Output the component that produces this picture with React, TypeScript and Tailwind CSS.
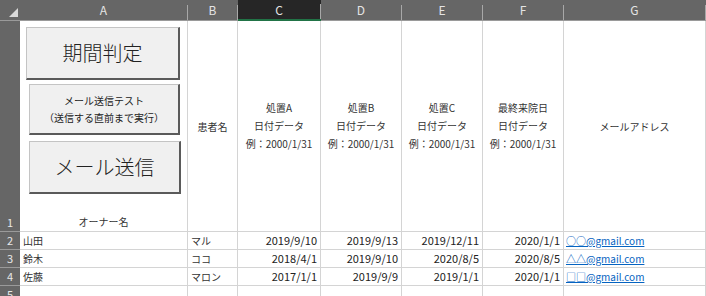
// Excel sheet mock: 患者の処置日付 + メール送信ボタン
import clsx from "clsx";

const FONT = "font-['Noto_Sans_CJK_JP','Noto_Sans',sans-serif]";

/* ---------- data ---------- */
const cols = ["A", "B", "C", "D", "E", "F", "G"];

const rows = [
  { owner: "山田", pet: "マル", a: "2019/9/10", b: "2019/9/13", c: "2019/12/11", last: "2020/1/1", mail: "○○@gmail.com" },
  { owner: "鈴木", pet: "ココ", a: "2018/4/1", b: "2019/9/10", c: "2020/8/5", last: "2020/8/5", mail: "△△@gmail.com" },
  { owner: "佐藤", pet: "マロン", a: "2017/1/1", b: "2019/9/9", c: "2019/1/1", last: "2020/1/1", mail: "□□@gmail.com" },
];

const dateHeads = ["処置A", "処置B", "処置C", "最終来院日"];

/* ---------- small parts ---------- */
function ColHead({ label, active }: { label: string; active?: boolean }) {
  return (
    <div
      className={clsx(
        "flex text-[12px] text-[#e4e4e4]",
        active ? "border-b-2 border-[#217346] bg-[#262626]" : "border-b border-[#9a9a9a] bg-[#666666]",
      )}
    >
      <span className="flex flex-1 items-center justify-center">{label}</span>
      <span className="h-[15px] w-px self-end bg-[#a8a8a8]" />
    </div>
  );
}

function RowHead({ n, bottom }: { n: number; bottom?: boolean }) {
  return (
    <div
      className={clsx(
        "flex justify-center border-b border-[#9a9a9a] bg-[#666666] text-[11px] text-[#e8e8e8]",
        bottom ? "items-end pb-[1px]" : "items-center",
      )}
    >
      {n}
    </div>
  );
}

const cell = "border-b border-r border-[#d4d4d4]";

function SheetButton({
  className,
  children,
}: {
  className: string;
  children: React.ReactNode;
}) {
  return (
    <div
      className={clsx(
        "flex flex-col items-center justify-center border-l border-t border-b-2 border-r-2 border-l-[#c4c4c4] border-t-[#c4c4c4] border-b-[#5a5a5a] border-r-[#5a5a5a] bg-[#f0f0f0] text-[#222]",
        className,
      )}
    >
      {children}
    </div>
  );
}

/* ─────────────────────────────────────────────────────────── */
export default function App() {
  return (
    <div className={clsx("h-[296px] w-[706px] overflow-hidden bg-white", FONT)}>
      <div className="grid grid-cols-[20px_168px_50px_83px_81px_81px_81px_142px] grid-rows-[21px_211px_18px_18px_18px_18px]">
        {/* corner */}
        <div className="flex items-end justify-end border-b border-[#9a9a9a] bg-[#666666] pb-[3px] pr-[2px]">
          <svg width="9" height="9" viewBox="0 0 9 9">
            <polygon points="9,0 9,9 0,9" fill="#d9d9d9" />
          </svg>
        </div>
        {cols.map((c) => (
          <ColHead key={c} label={c} active={c === "C"} />
        ))}

        {/* row 1 (header row with buttons) */}
        <RowHead n={1} bottom />
        <div className={clsx(cell, "flex flex-col text-[10px] text-[#333]")}>
          <SheetButton className="ml-[6px] mt-[6px] h-[53px] w-[154px] text-[20px] font-light">期間判定</SheetButton>
          <SheetButton className="ml-[9px] mt-[4px] h-[51px] w-[151px] text-[10px] leading-[17px]">
            <span>メール送信テスト</span>
            <span>（送信する直前まで実行）</span>
          </SheetButton>
          <SheetButton className="ml-[9px] mt-[6px] h-[53px] w-[152px] text-[20px] font-light">メール送信</SheetButton>
          <span className="mt-auto pb-[2px] text-center">オーナー名</span>
        </div>
        <div className={clsx(cell, "flex items-center justify-center text-[10px] text-[#333]")}>患者名</div>
        {dateHeads.map((h) => (
          <div
            key={h}
            className={clsx(cell, "flex flex-col items-center justify-center text-[10px] leading-[18px] text-[#333]")}
          >
            <span>{h}</span>
            <span>日付データ</span>
            <span>例：2000/1/31</span>
          </div>
        ))}
        <div className={clsx(cell, "flex items-center justify-center text-[10px] text-[#333]")}>メールアドレス</div>

        {/* data rows */}
        {rows.map((r, i) => (
          <div key={r.owner} className="contents">
            <RowHead n={i + 2} />
            <div className={clsx(cell, "flex items-center px-[3px] text-[10px] text-[#333]")}>{r.owner}</div>
            <div className={clsx(cell, "flex items-center px-[3px] text-[10px] text-[#333]")}>{r.pet}</div>
            {[r.a, r.b, r.c, r.last].map((d, j) => (
              <div key={j} className={clsx(cell, "flex items-center justify-end px-[3px] text-[11px] text-[#222]")}>
                {d}
              </div>
            ))}
            <div className={clsx(cell, "flex items-center px-[2px] text-[10px] text-[#0563c1] underline")}>{r.mail}</div>
          </div>
        ))}

        {/* row 5 (empty) */}
        <RowHead n={5} />
        {cols.map((c) => (
          <div key={c} className={cell} />
        ))}
      </div>
    </div>
  );
}
